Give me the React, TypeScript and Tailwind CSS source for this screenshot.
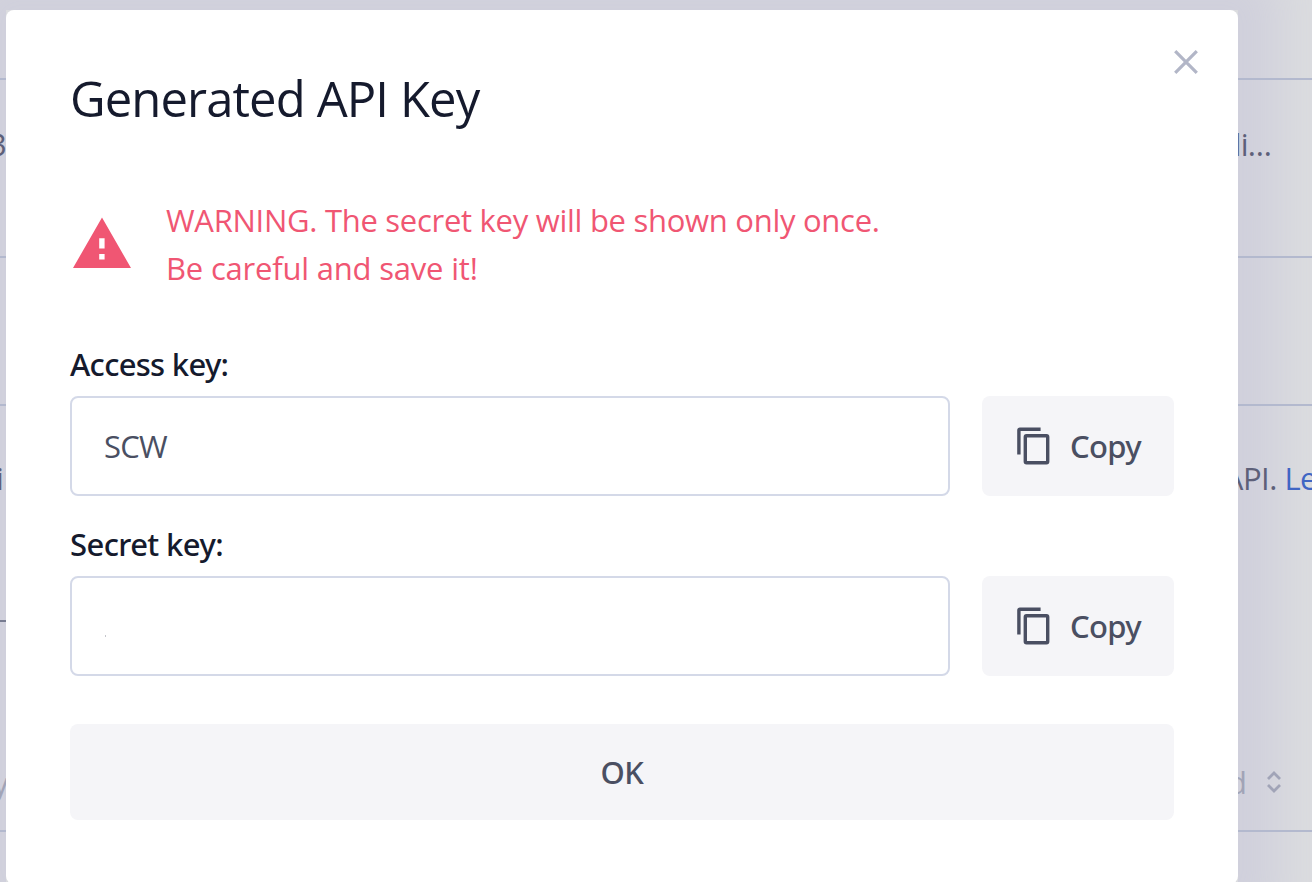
import React from "react";

function CopyIcon() {
  return (
    <svg width="34" height="38" viewBox="0 0 34 38" fill="none" stroke="#4a4f62" strokeWidth="3.4" strokeLinejoin="round">
      <path d="M1.9 27.5V3.2a1 1 0 0 1 1-1H23.6" />
      <rect x="8.3" y="8.8" width="22.4" height="27" rx="1.2" />
    </svg>
  );
}

function WarningIcon() {
  return (
    <svg width="58" height="51" viewBox="0 0 58 51" className="mb-[4px] shrink-0">
      <path fill="#f05673" fillRule="evenodd" d="M29 0.5L58 51H0ZM26.2 21.3V31.5H31.6V21.3ZM26.2 37.1V42.5H31.6V37.1Z" />
    </svg>
  );
}

function KeyField({ label, labelClass, children }: { label: string; labelClass: string; children?: React.ReactNode }) {
  return (
    <div className="flex h-[180px] flex-col">
      <div className="flex h-[50px] items-center pb-[14px]">
        <span className={`whitespace-nowrap font-['Noto_Sans',sans-serif] font-medium text-[31px] text-[#151a2d] ${labelClass}`}>{label}</span>
      </div>
      <div className="flex gap-8">
        <div className="flex h-[100px] w-[880px] items-center rounded-lg border-2 border-[#d4d9e8] px-8 text-[31px] text-[#4a4f62]">
          {children}
        </div>
        <button className="flex h-[100px] w-[192px] items-center gap-[19px] rounded-lg bg-[#f5f5f8] pl-[35px] font-['Noto_Sans',sans-serif] text-[31px] font-medium text-[#4a4f62]">
          <CopyIcon />
          <span className="tracking-[-0.7px]">Copy</span>
        </button>
      </div>
    </div>
  );
}

export default function App() {
  return (
    <div className="relative h-[882px] w-[1312px] overflow-hidden bg-[#dbdcdf] font-['Open_Sans',sans-serif] text-[31px] leading-[48px]">
      <div className="absolute top-[10px] left-[6px] h-[874px] w-[1232px] shadow-[0_0_44px_40px_#d0d0dc]" />

      <div className="relative flex h-full flex-col text-[#5d6079]">
        <div className="h-[80px] border-b-2 border-[#b3b9ce]" />
        <div className="flex h-[178px] justify-between border-b-2 border-[#b3b9ce] pt-[40px] pr-[41px]">
          <span className="-ml-[11px]">3</span>
          <span className="tracking-[-0.8px]">di…</span>
        </div>
        <div className="h-[148px] border-b-2 border-[#b3b9ce]" />
        <div className="flex h-[426px] flex-col border-b-2 border-[#b3b9ce] pt-[48px]">
          <div className="flex justify-between">
            <span className="-ml-[4px]">i</span>
            <span className="-mr-[5px] tracking-[-0.5px]">API. <span className="text-[#4066c4]">Le</span></span>
          </div>
          <div className="mt-[118px] h-[2px] w-[6px] bg-[#777b90]" />
          <div className="mt-[137px] flex justify-between pr-[30px] text-[#a1a4b7]">
            <span className="-ml-[7px]">y</span>
            <span className="-mt-[2px] flex items-center gap-[19px]">
              d
              <svg width="16" height="22" viewBox="0 0 16 22" fill="none" stroke="currentColor" strokeWidth="2.8">
                <path d="M2 8l6-6 6 6M2 14l6 6 6-6" />
              </svg>
            </span>
          </div>
        </div>
      </div>

      <main className="absolute top-[10px] left-[6px] flex h-[874px] w-[1232px] flex-col rounded-lg bg-white px-16 pt-[56px]">
        <button aria-label="Close" className="absolute top-[40px] left-[1168px]">
          <svg width="24" height="24" viewBox="0 0 24 24" stroke="#b2b6c7" strokeWidth="3.2">
            <path d="M1.2 1.2L22.8 22.8M22.8 1.2L1.2 22.8" />
          </svg>
        </button>
        <h1 className="flex h-[64px] items-center whitespace-nowrap text-[49px] tracking-[-0.9px] text-[#151a2d]">Generated API Key</h1>
        <div className="mt-[66px] flex h-[96px] items-center gap-9 pl-[3px] text-[#f05673]">
          <WarningIcon />
          <p className="-ml-[1px] whitespace-nowrap">
            <span className="block tracking-[-0.28px]">WARNING. The secret key will be shown only once.</span>
            <span className="block tracking-[-0.2px]">Be careful and save it!</span>
          </p>
        </div>
        <div className="mt-[54px]">
          <KeyField label="Access key:" labelClass="tracking-[-0.7px]">
            <span className="tracking-[-0.8px]">SCW</span>
          </KeyField>
          <KeyField label="Secret key:" labelClass="tracking-[-0.6px]">
            <span className="mt-[19px] ml-px h-[2px] w-px bg-[#c5c6cc]" />
          </KeyField>
        </div>
        <button className="mt-[18px] flex h-24 shrink-0 items-center justify-center rounded-lg bg-[#f5f5f8] font-['Noto_Sans',sans-serif] font-medium text-[#4a4f62]"><span className="tracking-[-0.4px]">OK</span></button>
      </main>
    </div>
  );
}
